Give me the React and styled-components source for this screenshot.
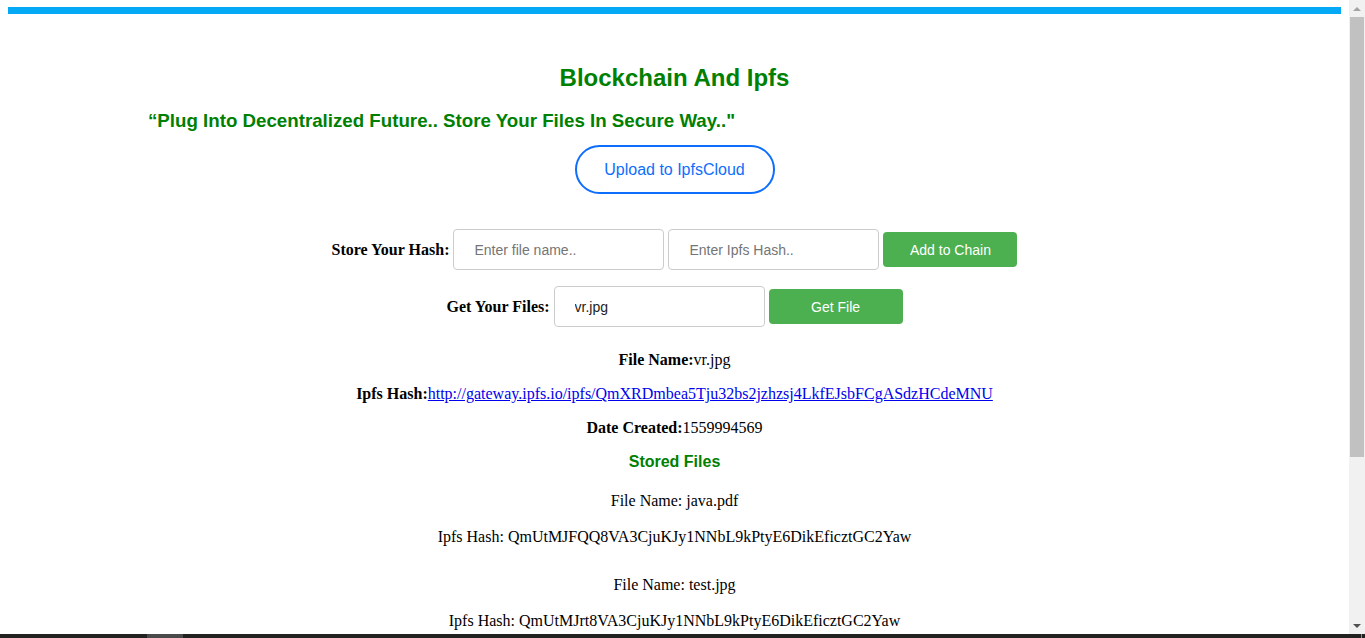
import React from "react";
import styled, { createGlobalStyle } from "styled-components";

const GlobalStyle = createGlobalStyle`
  html, body {
    margin: 0;
    padding: 0;
    height: 100%;
    overflow: hidden;
    background: #ffffff;
  }
  body {
    font-family: "Liberation Serif", "Times New Roman", serif;
    font-size: 16px;
    color: #000;
  }
`;

const Frame = styled.div`
  display: flex;
  flex-direction: column;
  height: 638px;
  width: 100%;
`;

const Window = styled.div`
  display: flex;
  height: 634px;
  flex: none;
`;

const Viewport = styled.div`
  flex: 1;
  min-width: 0;
  overflow: hidden;
`;

const ScrollBar = styled.div`
  width: 16px;
  flex: none;
  display: flex;
  flex-direction: column;
  background: #f1f1f1;
`;

const ArrowButton = styled.div`
  height: 17px;
  flex: none;
  display: flex;
  align-items: center;
  justify-content: center;
`;

const Triangle = styled.span`
  width: 0;
  height: 0;
  border-left: 4px solid transparent;
  border-right: 4px solid transparent;
  ${(p) =>
    p.$up
      ? `border-bottom: 4px solid ${p.$color};`
      : `border-top: 4px solid ${p.$color};`}
`;

const Track = styled.div`
  flex: 1;
  display: flex;
  flex-direction: column;
  padding: 0 1px;
`;

const Thumb = styled.div`
  height: 440px;
  background: #c1c1c1;
`;

const Page = styled.div`
  padding: 7px 8px 0;
  box-sizing: border-box;
`;

const TopBar = styled.div`
  height: 7px;
  background: #03a9f4;
`;

const Title = styled.h2`
  margin: 50px 0 0;
  font-family: "Liberation Sans", Arial, sans-serif;
  font-size: 24px;
  line-height: 28px;
  font-weight: bold;
  color: #008000;
  text-align: center;
`;

const Quote = styled.h3`
  margin: 18px 0 0;
  padding-left: 140px;
  font-family: "Liberation Sans", Arial, sans-serif;
  font-size: 18.72px;
  line-height: 22px;
  font-weight: bold;
  color: #008000;
  text-align: left;
`;

const UploadWrap = styled.div`
  display: flex;
  justify-content: center;
  margin-top: 13px;
`;

const UploadButton = styled.button`
  width: 200px;
  height: 49px;
  box-sizing: border-box;
  border: 2px solid #0d6efd;
  border-radius: 25px;
  background: #fff;
  color: #0d6efd;
  font-family: "Liberation Sans", Arial, sans-serif;
  font-size: 16px;
  cursor: pointer;
`;

const FormRow = styled.div`
  display: flex;
  justify-content: center;
  align-items: center;
  gap: 4px;
  margin-top: ${(p) => p.$top}px;
`;

const Label = styled.label`
  font-family: "Liberation Serif", "Times New Roman", serif;
  font-weight: bold;
  font-size: 16px;
`;

const TextInput = styled.input`
  width: 211px;
  height: 41px;
  box-sizing: border-box;
  padding: 0 20px;
  border: 1px solid #cccccc;
  border-radius: 4px;
  font-family: "Liberation Sans", Arial, sans-serif;
  font-size: 14px;
  color: #222;
  outline: none;
  &::placeholder {
    color: #757575;
  }
`;

const GreenButton = styled.button`
  width: 134px;
  height: 35px;
  border: none;
  border-radius: 4px;
  background: #4caf50;
  color: #fff;
  font-family: "Liberation Sans", Arial, sans-serif;
  font-size: 14px;
  cursor: pointer;
`;

const Details = styled.div`
  display: flex;
  flex-direction: column;
  align-items: center;
  gap: 16px;
  margin-top: 24px;
`;

const Line = styled.p`
  margin: 0;
  line-height: 18px;
  text-align: center;
  white-space: nowrap;
`;

const Key = styled.b`
  font-weight: bold;
`;

const HashLink = styled.a`
  color: #0000ee;
  text-decoration: underline;
`;

const StoredTitle = styled.h4`
  margin: 0;
  font-family: "Liberation Sans", Arial, sans-serif;
  font-size: 16px;
  line-height: 18px;
  font-weight: bold;
  color: #008000;
`;

const StoredList = styled.div`
  display: flex;
  flex-direction: column;
  align-items: center;
  gap: 30px;
  margin-top: 21px;
`;

const Entry = styled.div`
  display: flex;
  flex-direction: column;
  align-items: center;
  gap: 18px;
`;

const BottomBar = styled.div`
  height: 4px;
  flex: none;
  background: #222220;
  display: flex;
`;

const BarMark = styled.span`
  margin-left: 147px;
  width: 36px;
  background: #4a4a4a;
`;

const BarTick = styled.span`
  margin-left: auto;
  margin-right: 3px;
  width: 1px;
  background: #8a8a8a;
`;

const stored = [
  { name: "java.pdf", hash: "QmUtMJFQQ8VA3CjuKJy1NNbL9kPtyE6DikEficztGC2Yaw" },
  { name: "test.jpg", hash: "QmUtMJrt8VA3CjuKJy1NNbL9kPtyE6DikEficztGC2Yaw" },
  { name: "vr.jpg", hash: "QmXRDmbea5Tju32bs2jzhzsj4LkfEJsbFCgASdzHCdeMNU" },
];

export default function App() {
  return (
    <>
      <GlobalStyle />
      <Frame>
        <Window>
          <Viewport>
            <Page>
              <TopBar />
              <Title>Blockchain And Ipfs</Title>
              <Quote>“Plug Into Decentralized Future.. Store Your Files In Secure Way.."</Quote>
              <UploadWrap>
                <UploadButton>Upload to IpfsCloud</UploadButton>
              </UploadWrap>
              <FormRow $top={35}>
                <Label>Store Your Hash:</Label>
                <TextInput placeholder="Enter file name.." />
                <TextInput placeholder="Enter Ipfs Hash.." />
                <GreenButton>Add to Chain</GreenButton>
              </FormRow>
              <FormRow $top={16}>
                <Label>Get Your Files:</Label>
                <TextInput defaultValue="vr.jpg" />
                <GreenButton>Get File</GreenButton>
              </FormRow>
              <Details>
                <Line>
                  <Key>File Name:</Key>vr.jpg
                </Line>
                <Line>
                  <Key>Ipfs Hash:</Key>
                  <HashLink href="#">
                    http://gateway.ipfs.io/ipfs/QmXRDmbea5Tju32bs2jzhzsj4LkfEJsbFCgASdzHCdeMNU
                  </HashLink>
                </Line>
                <Line>
                  <Key>Date Created:</Key>1559994569
                </Line>
                <StoredTitle>Stored Files</StoredTitle>
              </Details>
              <StoredList>
                {stored.map((s) => (
                  <Entry key={s.name}>
                    <Line>File Name: {s.name}</Line>
                    <Line>Ipfs Hash: {s.hash}</Line>
                  </Entry>
                ))}
              </StoredList>
            </Page>
          </Viewport>
          <ScrollBar>
            <ArrowButton>
              <Triangle $up $color="#a3a3a3" />
            </ArrowButton>
            <Track>
              <Thumb />
            </Track>
            <ArrowButton>
              <Triangle $color="#505050" />
            </ArrowButton>
          </ScrollBar>
        </Window>
        <BottomBar>
          <BarMark />
          <BarTick />
        </BottomBar>
      </Frame>
    </>
  );
}
